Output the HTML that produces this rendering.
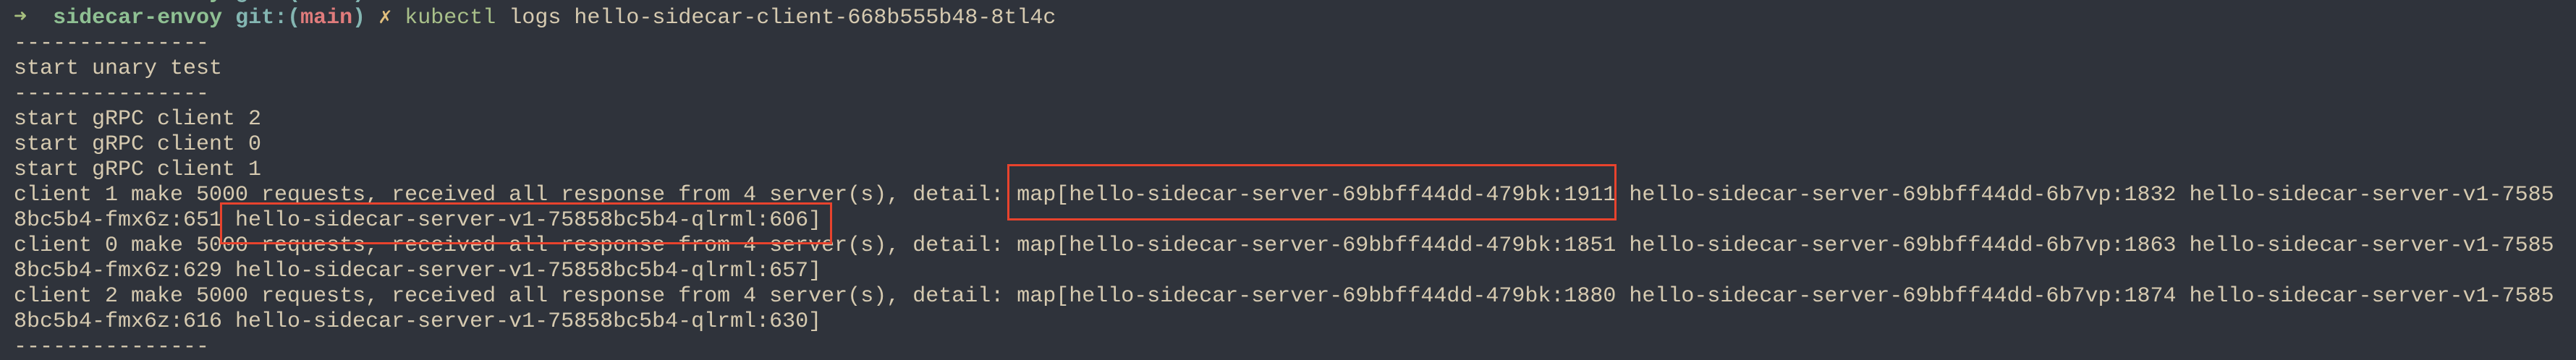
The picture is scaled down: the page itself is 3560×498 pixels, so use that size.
<!DOCTYPE html>
<html><head><meta charset="utf-8"><style>
html,body{margin:0;padding:0;}
body{width:3560px;height:494px;background:#2f333b;overflow:hidden;position:relative;}
#t{position:absolute;left:19px;top:-27.5px;font-family:"Liberation Mono","DejaVu Sans Mono",monospace;font-size:30px;line-height:35px;color:#d6cab0;white-space:pre;}
.a{color:#a8c07f;font-weight:bold}
.g{color:#8fc093;font-weight:bold}
.c{color:#84b6b2;font-weight:bold}
.r{color:#e07c7c;font-weight:bold}
.y{color:#e2bf7d}
.k{color:#a9c08a}
.box{position:absolute;border:3px solid #e8432d;box-sizing:border-box;}
</style></head><body>
<div id="t"><div><span class="a">➜</span>  <span class="g">sidecar-envoy</span> <span class="c">git:(</span><span class="r">main</span><span class="c">)</span> <span class="y">✗</span></div><div><span class="a">➜</span>  <span class="g">sidecar-envoy</span> <span class="c">git:(</span><span class="r">main</span><span class="c">)</span> <span class="y">✗</span> <span class="k">kubectl</span> logs hello-sidecar-client-668b555b48-8tl4c</div><div>---------------</div><div>start unary test</div><div>---------------</div><div>start gRPC client 2</div><div>start gRPC client 0</div><div>start gRPC client 1</div><div>client 1 make 5000 requests, received all response from 4 server(s), detail: map[hello-sidecar-server-69bbff44dd-479bk:1911 hello-sidecar-server-69bbff44dd-6b7vp:1832 hello-sidecar-server-v1-7585</div><div>8bc5b4-fmx6z:651 hello-sidecar-server-v1-75858bc5b4-qlrml:606]</div><div>client 0 make 5000 requests, received all response from 4 server(s), detail: map[hello-sidecar-server-69bbff44dd-479bk:1851 hello-sidecar-server-69bbff44dd-6b7vp:1863 hello-sidecar-server-v1-7585</div><div>8bc5b4-fmx6z:629 hello-sidecar-server-v1-75858bc5b4-qlrml:657]</div><div>client 2 make 5000 requests, received all response from 4 server(s), detail: map[hello-sidecar-server-69bbff44dd-479bk:1880 hello-sidecar-server-69bbff44dd-6b7vp:1874 hello-sidecar-server-v1-7585</div><div>8bc5b4-fmx6z:616 hello-sidecar-server-v1-75858bc5b4-qlrml:630]</div><div>---------------</div></div>
<div class="box" style="left:1392px;top:227px;width:842px;height:78px;"></div>
<div class="box" style="left:304px;top:280px;width:846px;height:58px;"></div>
</body></html>
